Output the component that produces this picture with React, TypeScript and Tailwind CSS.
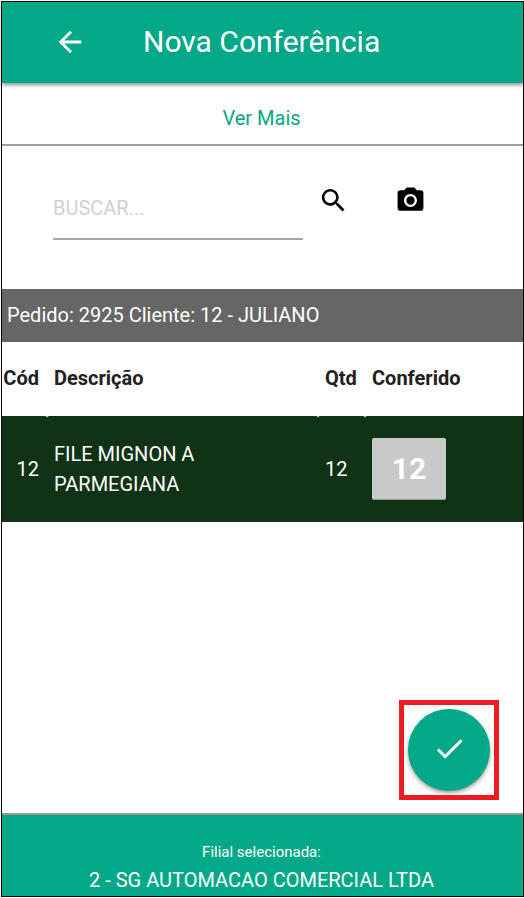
import React from "react";

const items = [
  { code: 12, description: "FILE MIGNON A PARMEGIANA", quantity: 12, checked: 12 },
];

function Icon({ path, className }: { path: string; className: string }) {
  return (
    <svg viewBox="0 0 24 24" fill="currentColor" aria-hidden="true" className={className}>
      <path d={path} />
    </svg>
  );
}

const ARROW_BACK = "M20 11H7.83l5.59-5.59L12 4l-8 8 8 8 1.41-1.41L7.83 13H20v-2z";
const CHECK = "M9 16.17L4.83 12l-1.42 1.41L9 19 21 7l-1.41-1.41z";
const SEARCH =
  "M15.5 14h-.79l-.28-.27C15.41 12.59 16 11.11 16 9.5 16 5.91 13.09 3 9.5 3S3 5.91 3 9.5 5.91 16 9.5 16c1.61 0 3.09-.59 4.23-1.57l.27.28v.79l5 4.99L20.49 19l-4.99-5zm-6 0C7.01 14 5 11.99 5 9.5S7.01 5 9.5 5 14 7.01 14 9.5 11.99 14 9.5 14z";
const CAMERA =
  "M12 8.8a3.2 3.2 0 1 0 0 6.4 3.2 3.2 0 1 0 0-6.4zM9 2L7.17 4H4c-1.1 0-2 .9-2 2v12c0 1.1.9 2 2 2h16c1.1 0 2-.9 2-2V6c0-1.1-.9-2-2-2h-3.17L15 2H9zm3 15c-2.76 0-5-2.24-5-5s2.24-5 5-5 5 2.24 5 5-2.24 5-5 5z";

export default function App() {
  return (
    <div className="min-h-screen bg-white py-px pl-px font-['Roboto',sans-serif] text-xl text-[#212121]">
      <div className="flex min-h-[calc(100vh-2px)] flex-col border border-black">
        <header className="relative z-10 flex h-[81px] items-center bg-[#02a887] pb-0.5 pl-[51px] text-white shadow-[0_2px_4px_rgba(0,0,0,0.45)]">
          <button type="button" aria-label="Voltar" className="size-[34px]">
            <Icon path={ARROW_BACK} className="size-[34px]" />
          </button>
          <h1 className="ml-14 text-[30px] leading-9">Nova Conferência</h1>
        </header>

        <div className="flex h-[63px] items-center justify-center border-b-2 border-[#9e9e9e] pt-2 pr-0.5">
          <button type="button" className="text-[#02a887]">Ver Mais</button>
        </div>

        <form className="flex h-[143px] items-start pr-[97px] pl-[51px] pt-7" onSubmit={(e) => e.preventDefault()}>
          <input
            type="text"
            aria-label="Buscar"
            placeholder="BUSCAR..."
            className="h-[66px] min-w-0 flex-1 border-b-2 border-[#a5a5a5] bg-transparent pt-1 outline-none placeholder:text-[#d1d1d1]"
          />
          <button type="submit" aria-label="Pesquisar" className="mt-[11px] ml-[15px] text-black">
            <Icon path={SEARCH} className="size-[31px]" />
          </button>
          <button type="button" aria-label="Ler com a câmera" className="mt-[11px] ml-[46px] text-black">
            <Icon path={CAMERA} className="size-[31px]" />
          </button>
        </form>

        <h2 className="bg-[#666666] px-[5px] py-3 leading-[29px] text-white">
          Pedido: 2925 Cliente: 12 - JULIANO
        </h2>

        <table className="w-full table-fixed border-separate border-spacing-0">
          <thead>
            <tr className="h-[74px] text-left">
              <th className="w-[45px] pr-2 pb-0.5 text-right font-bold">Cód</th>
              <th className="px-[7px] pb-0.5 font-bold">Descrição</th>
              <th className="w-[47px] px-[7px] pb-0.5 font-bold">Qtd</th>
              <th className="w-[158px] px-[7px] pb-0.5 font-bold">Conferido</th>
            </tr>
          </thead>
          <tbody>
            {items.map((item) => (
              <tr key={item.code} className="h-[106px] text-white">
                <td className="rounded-tr-[2px] bg-[#0f3314] pr-2 text-right">{item.code}</td>
                <td className="rounded-t-[2px] bg-[#0f3314] pr-[60px] pl-[7px] leading-[30px]">{item.description}</td>
                <td className="rounded-t-[2px] bg-[#0f3314] px-[7px]">{item.quantity}</td>
                <td className="rounded-tl-[2px] bg-[#0f3314] px-[7px]">
                  <button
                    type="button"
                    className="block h-[62px] w-[74px] rounded-[2px] border-b border-[#999999] bg-[#c9c9c9] text-[30px] leading-none font-bold"
                  >
                    {item.checked}
                  </button>
                </td>
              </tr>
            ))}
          </tbody>
        </table>

        <div className="mt-auto mr-6 mb-[13px] self-end border-5 border-[#ed1c24] p-1">
          <button
            type="button"
            aria-label="Confirmar"
            className="flex size-[82px] items-center justify-center rounded-full bg-[#02a887] pb-1 text-white shadow-[0_2px_4px_rgba(0,0,0,0.4)]"
          >
            <Icon path={CHECK} className="size-[35px]" />
          </button>
        </div>

        <footer className="flex h-[83px] flex-col items-center border-t-2 border-[#999999] bg-[#02a887] pt-[25px] pr-0.5 text-white">
          <p className="text-[15px] leading-6">Filial selecionada:</p>
          <p className="leading-8">2 - SG AUTOMACAO COMERCIAL LTDA</p>
        </footer>
      </div>
    </div>
  );
}
